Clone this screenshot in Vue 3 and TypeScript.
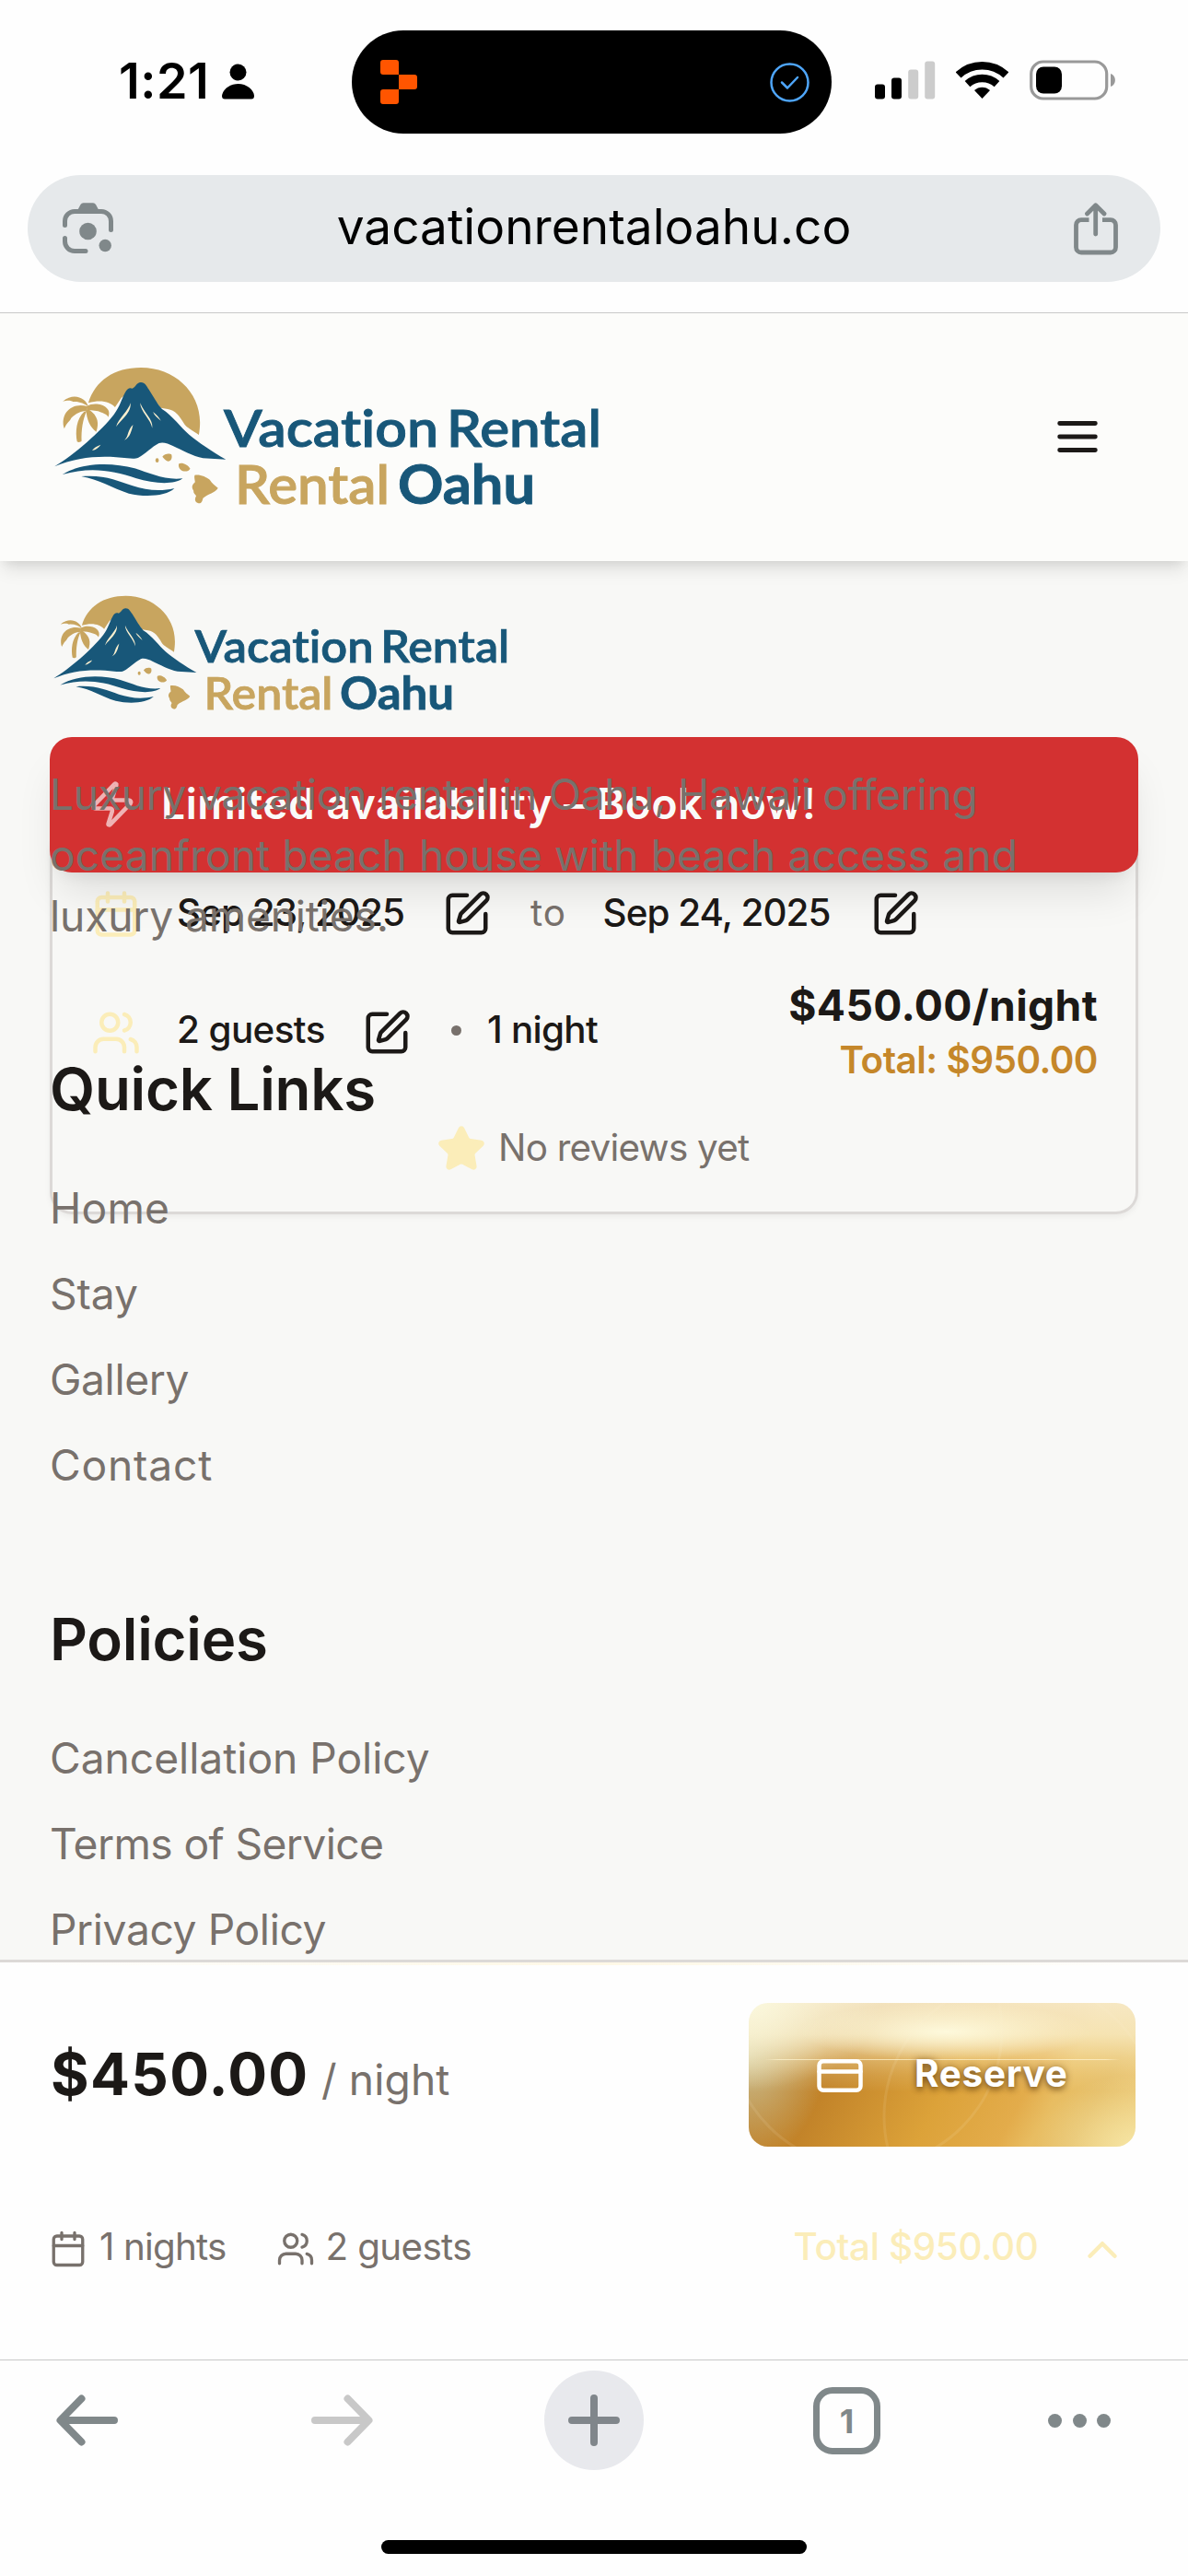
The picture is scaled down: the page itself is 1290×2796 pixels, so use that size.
<script setup lang="ts">
interface FooterLink { label: string; spacing: string }

const quickLinks: FooterLink[] = [
  { label: 'Home', spacing: '0.2px' },
  { label: 'Stay', spacing: '-0.1px' },
  { label: 'Gallery', spacing: '-0.4px' },
  { label: 'Contact', spacing: '0.8px' },
]
const policies: FooterLink[] = [
  { label: 'Cancellation Policy', spacing: '-0.05px' },
  { label: 'Terms of Service', spacing: '-0.6px' },
  { label: 'Privacy Policy', spacing: '-0.4px' },
]
</script>

<template>
  <div class="screen">
    <svg class="defs" width="0" height="0" aria-hidden="true">
      <symbol id="brand" viewBox="0 0 640 240">
        <g transform="scale(0.40816 0.33333)">
          <path fill="#c8a55f" d="M137 172C155 100 205 57 277 57C365 57 434 135 434 235C434 250 433 262 431 276C415 262 398 252 392 240C380 215 368 195 348 192L330 188L277 110L225 155L208 186C195 168 170 160 137 172Z" />
          <g fill="#c8a55f">
            <path d="M137 184C131 158 100 136 69 167C85 162 92 165 96 168C112 166 127 174 137 184Z" />
            <path d="M134 183C95 168 60 205 73 256C80 235 88 232 91 222C104 205 118 198 134 197Z" />
            <path d="M132 183C158 164 203 183 190 218C186 208 178 206 172 203C160 197 148 196 134 196Z" />
            <path d="M131 196C133 225 140 250 158 266C165 240 165 215 137 192Z" />
            <path d="M126 200C105 225 102 265 107 298C112 302 117 298 119 296C118 260 122 225 133 198Z" />
          </g>
          <path fill="#185779" d="M47 379C100 340 170 265 205 210C222 182 225 160 235 138C240 125 247 121 254 125C262 122 266 104 277 105C288 105 292 118 298 128C310 150 320 175 333 192C360 212 385 255 405 275C430 300 465 330 503 356L442 352C415 345 385 325 362 312C350 304 335 298 325 303C305 315 290 338 270 350C262 355 250 353 240 352C180 342 110 345 47 379Z" />
          <g fill="#fbf0cf">
            <path d="M249 172C246 195 215 225 211 250C225 225 252 205 249 172Z" />
            <path d="M275 172C275 200 303 225 307 254C310 225 285 205 275 172Z" />
            <path d="M309 201C312 212 322 222 330 230C325 218 318 210 309 201Z" />
            <path d="M256 243C240 262 245 280 233 293C248 285 252 262 256 243Z" />
            <path d="M170 308C160 312 152 318 147 327C158 324 164 318 170 308Z" />
          </g>
          <path fill="#185779" d="M68 405C120 365 200 365 260 385C300 400 340 425 388 418C365 440 310 435 265 418C200 390 140 380 68 405Z" />
          <path fill="#185779" d="M118 411C180 405 215 425 255 442C290 455 325 462 366 450C345 475 290 480 245 467C200 450 165 420 118 411Z" />
          <g fill="#c8a55f">
            <ellipse cx="320" cy="359" rx="4.5" ry="7" />
            <path d="M334 347C340 335 355 336 358 340C361 350 358 362 349 362C343 360 338 352 334 347Z" />
            <path d="M378 370C385 364 402 372 408 386C404 396 390 397 383 390C378 385 376 378 378 370Z" />
            <path d="M420 407C435 404 450 413 460 422C466 435 474 440 482 449C475 465 455 468 442 482C440 492 438 500 430 499C422 496 418 488 424 475C420 468 416 465 417 458C410 445 414 438 421 430C420 420 418 412 420 407Z" />
          </g>
        </g>
      </symbol>
      <symbol id="i-calendar" viewBox="0 0 24 24">
        <path d="M8 2v4M16 2v4M3 10h18" />
        <rect x="3" y="4" width="18" height="18" rx="2" />
      </symbol>
      <symbol id="i-users" viewBox="0 0 24 24">
        <path d="M16 21v-2a4 4 0 0 0-4-4H6a4 4 0 0 0-4 4v2M22 21v-2a4 4 0 0 0-3-3.87M16 3.13a4 4 0 0 1 0 7.75" />
        <circle cx="9" cy="7" r="4" />
      </symbol>
      <symbol id="i-edit" viewBox="0 0 24 24">
        <path d="M12 3H5a2 2 0 0 0-2 2v14a2 2 0 0 0 2 2h14a2 2 0 0 0 2-2v-7" />
        <path d="M18.375 2.625a1 1 0 0 1 3 3l-9.013 9.014a2 2 0 0 1-.853.505l-2.873.84a.5.5 0 0 1-.62-.62l.84-2.873a2 2 0 0 1 .506-.852z" />
      </symbol>
    </svg>

    <div class="status">
      <span class="clock">1:21</span>
      <svg class="person" width="36" height="39" viewBox="0 0 36 39">
        <circle cx="17.5" cy="9.5" r="9" />
        <path d="M17.5 22C27 22 34.5 28.5 35 35C35 37.5 34 38.5 32 38.5H3C1 38.5 0 37.5 0 35C.5 28.5 8 22 17.5 22Z" />
      </svg>
      <div class="island">
        <svg width="40" height="48" viewBox="0 0 40 48" fill="#ff5500">
          <path d="M3 0H17Q20 0 20 3V16H3Q0 16 0 13V3Q0 0 3 0ZM20 16H37Q40 16 40 19V29Q40 32 37 32H20ZM3 32H20V45Q20 48 17 48H3Q0 48 0 45V35Q0 32 3 32Z" />
        </svg>
        <svg width="43" height="43" viewBox="0 0 43 43" fill="none" stroke="#4ea5f9" stroke-width="2.5" stroke-linecap="round" stroke-linejoin="round">
          <circle cx="21.5" cy="21.5" r="20" />
          <path d="M13 21.5L19 27.5L30 16" />
        </svg>
      </div>
      <svg class="signal" width="66" height="42" viewBox="0 0 66 42">
        <rect x="0" y="25.5" width="11" height="16" rx="3" />
        <rect x="18" y="18.5" width="11" height="23" rx="3" />
        <rect x="36.2" y="9.5" width="11" height="32" rx="3" fill="#ccc" />
        <rect x="54.2" y="0.5" width="11" height="41" rx="3" fill="#ccc" />
      </svg>
      <svg class="wifi" width="57" height="42" viewBox="0 0 57 42">
        <g fill="none" stroke="#000" stroke-width="8.5">
          <path d="M2.6 16.5A38 38 0 0 1 54.4 16.5" />
          <path d="M12.5 26.2A24 24 0 0 1 44.5 26.2" />
        </g>
        <path d="M28.5 42L20 33A12.5 12.5 0 0 1 37 33Z" />
      </svg>
      <svg class="battery" width="94" height="44" viewBox="0 0 94 44">
        <rect x="1.7" y="2" width="82" height="40" rx="13" fill="none" stroke="#999" stroke-width="3.2" />
        <rect x="7" y="7.5" width="28" height="29" rx="8" />
        <path fill="#999" d="M88 15C94.5 17 94.5 27 88 29Z" />
      </svg>
    </div>

    <div class="urlbar">
      <svg width="56" height="56" viewBox="0 0 56 56" fill="#80888a">
        <path fill="none" stroke="#80888a" stroke-width="5" stroke-linecap="round" d="M2.5 24.5V20A10.5 10.5 0 0 1 13 9.5H42A10.5 10.5 0 0 1 52.5 20V29.5M2.5 38.5V42A10.5 10.5 0 0 0 13 52.5H25" />
        <path d="M16 8.5L19.5 2Q20.5 .3 22.5 .3H33Q35 .3 36 2L39.5 8.5Z" />
        <circle cx="27.5" cy="31" r="9.3" />
        <circle cx="46.2" cy="46.5" r="6.7" />
      </svg>
      <span class="url">vacationrentaloahu.co</span>
      <svg width="48" height="57" viewBox="0 0 48 57" fill="none" stroke="#80888a" stroke-width="4.8" stroke-linejoin="round">
        <path d="M16.5 18.7H8A5.5 5.5 0 0 0 2.5 24.2V48.5A5.5 5.5 0 0 0 8 54H40A5.5 5.5 0 0 0 45.5 48.5V24.2A5.5 5.5 0 0 0 40 18.7H31" />
        <path stroke-linecap="round" d="M23.7 34V3.5M14.5 12L23.7 2.8L33 12" />
      </svg>
    </div>

    <header class="site-header">
      <svg class="logo" width="640" height="240" viewBox="0 0 640 240">
        <use href="#brand" width="640" height="240" />
        <text x="203" y="105" textLength="233" lengthAdjust="spacingAndGlyphs">Vacation</text>
        <text x="445" y="105" textLength="168" lengthAdjust="spacingAndGlyphs">Rental</text>
        <text class="sand" x="215" y="166.5" textLength="168" lengthAdjust="spacingAndGlyphs">Rental</text>
        <text class="bold" x="392" y="166.5" textLength="149" lengthAdjust="spacingAndGlyphs">Oahu</text>
      </svg>
      <svg class="menu" width="58" height="58" viewBox="0 0 24 24"><path d="M4 6h16M4 12h16M4 18h16" /></svg>
    </header>

    <main class="stage">
      <section class="booking">
        <div class="banner">
          <svg class="icon zap" viewBox="0 0 24 24"><path d="M4 14a1 1 0 0 1-.78-1.63l9.9-10.2a.5.5 0 0 1 .86.46l-1.92 6.02A1 1 0 0 0 13 10h7a1 1 0 0 1 .78 1.63l-9.9 10.2a.5.5 0 0 1-.86-.46l1.92-6.02A1 1 0 0 0 11 14z" /></svg>
          <span>Limited availability – Book now!</span>
        </div>
        <div class="card">
          <div class="row dates">
            <svg class="icon gold"><use href="#i-calendar" /></svg>
            <span class="date from">Sep 23, 2025</span>
            <svg class="icon"><use href="#i-edit" /></svg>
            <span class="to">to</span>
            <span class="date until">Sep 24, 2025</span>
            <svg class="icon"><use href="#i-edit" /></svg>
          </div>
          <div class="row party">
            <svg class="icon gold"><use href="#i-users" /></svg>
            <span class="guests">2 guests</span>
            <svg class="icon"><use href="#i-edit" /></svg>
            <i class="dot"></i>
            <span class="nights">1 night</span>
            <div class="price">
              <strong>$450.00/night</strong>
              <span>Total: $950.00</span>
            </div>
          </div>
          <div class="row reviews">
            <svg class="icon star" viewBox="0 0 24 24"><path d="M11.525 2.295a.53.53 0 0 1 .95 0l2.31 4.679a2.123 2.123 0 0 0 1.595 1.16l5.166.756a.53.53 0 0 1 .294.904l-3.736 3.638a2.123 2.123 0 0 0-.611 1.878l.882 5.14a.53.53 0 0 1-.771.56l-4.618-2.428a2.122 2.122 0 0 0-1.973 0L6.396 21.01a.53.53 0 0 1-.77-.56l.881-5.139a2.122 2.122 0 0 0-.611-1.879L2.16 9.795a.53.53 0 0 1 .294-.906l5.165-.755a2.122 2.122 0 0 0 1.597-1.16z" /></svg>
            <span>No reviews yet</span>
          </div>
        </div>
      </section>

      <footer class="site-footer">
        <svg class="logo" width="534" height="200" viewBox="0 0 640 240">
          <use href="#brand" width="640" height="240" />
          <text x="203" y="105" textLength="233" lengthAdjust="spacingAndGlyphs">Vacation</text>
          <text x="445" y="105" textLength="168" lengthAdjust="spacingAndGlyphs">Rental</text>
          <text class="sand" x="215" y="166.5" textLength="168" lengthAdjust="spacingAndGlyphs">Rental</text>
          <text class="bold" x="392" y="166.5" textLength="149" lengthAdjust="spacingAndGlyphs">Oahu</text>
        </svg>
        <p class="about">
          <span class="l1">Luxury vacation rental in Oahu, Hawaii offering</span><br />
          <span class="l2">oceanfront beach house with beach access and</span><br />
          <span class="l3">luxury amenities.</span>
        </p>
        <h3>Quick Links</h3>
        <a v-for="link in quickLinks" :key="link.label" :style="{ letterSpacing: link.spacing }">{{ link.label }}</a>
        <h3 class="second">Policies</h3>
        <a v-for="link in policies" :key="link.label" :style="{ letterSpacing: link.spacing }">{{ link.label }}</a>
      </footer>
    </main>

    <section class="reserve-bar">
      <div class="top-row">
        <div class="rate"><strong>$450.00</strong><span>/ night</span></div>
        <button class="reserve">
          <svg class="rings" width="420" height="156" viewBox="0 0 420 156">
            <circle cx="127" cy="30" r="148" />
            <circle cx="295" cy="123" r="148" />
          </svg>
          <span class="shine"></span>
          <svg class="icon cc" viewBox="0 0 24 24"><rect x="2" y="5" width="20" height="14" rx="2" /><path d="M2 10h20" /></svg>
          <span class="label">Reserve</span>
        </button>
      </div>
      <div class="summary">
        <svg class="small-icon"><use href="#i-calendar" /></svg>
        <span class="n">1 nights</span>
        <svg class="small-icon"><use href="#i-users" /></svg>
        <span class="g">2 guests</span>
        <span class="total">Total $950.00</span>
        <svg class="icon gold chevron" viewBox="0 0 24 24"><path d="m18 15-6-6-6 6" /></svg>
      </div>
    </section>

    <nav class="toolbar">
      <div class="buttons">
        <svg width="68" height="56" viewBox="0 0 68 56" fill="none" stroke="#80888a" stroke-width="8" stroke-linecap="round" stroke-linejoin="round"><path d="M63 28H5M27.5 4.5L4.5 28L27.5 51.5" /></svg>
        <svg class="fwd" width="68" height="56" viewBox="0 0 68 56" fill="none" stroke="#c8c8c8" stroke-width="8" stroke-linecap="round" stroke-linejoin="round"><path d="M5 28H63M40.5 4.5L63.5 28L40.5 51.5" /></svg>
        <span class="plus"><svg width="56" height="56" viewBox="0 0 56 56" fill="none" stroke="#80868b" stroke-width="8" stroke-linecap="round"><path d="M28 4V52M4 28H52" /></svg></span>
        <span class="tabs">1</span>
        <span class="more"><i></i><i></i><i></i></span>
      </div>
      <div class="home"></div>
    </nav>
  </div>
</template>

<style>
body { margin: 0; background: #fff; }
</style>

<style scoped>
.screen {
  width: 1290px;
  height: 2796px;
  display: flex;
  flex-direction: column;
  overflow: hidden;
  background: #fefefe;
  color: #1c1917;
  font-family: Inter, sans-serif;
  font-size: 46.2px;
}
.screen * { box-sizing: border-box; }
svg { display: block; flex: none; }
.defs { position: absolute; }
span, strong { white-space: nowrap; }

.status { height: 190px; flex: none; display: flex; align-items: flex-start; color: #000; }
.clock { width: 112px; margin: 55px 0 0 129px; font-size: 53.9px; font-weight: 600; line-height: 66px; letter-spacing: 0.5px; }
.person { margin-top: 69px; }
.island { width: 521px; height: 112px; margin: 33px 0 0 105px; padding: 0 24px 0 31px; border-radius: 56px; background: #000; display: flex; align-items: center; justify-content: space-between; }
.signal { margin: 65.5px 0 0 47px; }
.wifi { margin: 65px 0 0 22px; }
.battery { margin: 64.5px 0 0 23px; }

.urlbar { height: 116px; flex: none; margin: 0 30px 33px; padding: 0 46px 0 38px; border-radius: 58px; background: #e6e9eb; color: #000; display: flex; align-items: center; justify-content: space-between; }
.url { font-size: 53.2px; line-height: 60px; margin: -4px 0 0 0; }

.site-header { height: 270px; flex: none; position: relative; z-index: 3; border-top: 1px solid #c8c8c8; background: #fcfcfa; display: flex; justify-content: space-between; align-items: center; padding: 0 91px 0 40px; box-shadow: 0 12px 18px -3px rgba(0, 0, 0, 0.1), 0 6px 12px -6px rgba(0, 0, 0, 0.1); }
.site-header .logo { margin-top: 50px; }
.logo text { font-family: Lato, sans-serif; font-size: 56.5px; font-weight: 600; font-variant-ligatures: none; fill: #185779; stroke: #185779; stroke-width: 0.9; }
.logo .sand { font-size: 58.5px; fill: #c8a55f; stroke: #c8a55f; }
.logo .bold { font-size: 58.5px; font-weight: 700; }
.menu { margin-top: -2px; stroke: #1c1917; stroke-width: 2; stroke-linecap: round; fill: none; }

.icon { width: 54px; height: 54px; fill: none; stroke: currentColor; stroke-width: 2; stroke-linecap: round; stroke-linejoin: round; }
.gold { color: #fbedb9; }

.stage { height: 1518px; flex: none; display: grid; overflow: hidden; background: #f8f8f6; }
.booking, .site-footer { grid-area: 1 / 1; min-width: 0; }
.booking { padding: 191px 54px 0; }
.banner { position: relative; z-index: 1; height: 147px; padding-left: 41px; display: flex; align-items: center; gap: 26px; border-radius: 24px; background: #d33131; color: #fafaf9; font-weight: 600; letter-spacing: 0.51px; box-shadow: 0 30px 45px -9px rgba(0, 0, 0, 0.1), 0 12px 18px -12px rgba(0, 0, 0, 0.1); }
.banner span { margin-top: -4px; }
.zap { color: #efb3b4; margin-top: -2px; }
.card { height: 418px; margin-top: -47px; padding: 62px 41px 0 42px; border: 3px solid #dcd9d7; border-radius: 24px; box-shadow: 0 3px 6px rgba(0, 0, 0, 0.05); font-size: 40.4px; }
.row { display: flex; align-items: center; }
.row span { line-height: 52px; }
.dates { height: 54px; }
.date, .guests, .nights { font-weight: 500; margin-top: -2px; }
.date { letter-spacing: -0.95px; }
.from { margin-left: 39px; width: 288px; }
.to { margin: -2px 0 0 42px; width: 78.5px; letter-spacing: 1px; color: #78716c; }
.until { width: 290.5px; }
.party { height: 126px; margin-top: 39px; }
.guests { margin-left: 39px; width: 200.5px; letter-spacing: -0.6px; margin-top: -6px; }
.dot { width: 11px; height: 11px; margin: -5px 28px 0 43.5px; border-radius: 50%; background: #78716c; }
.nights { letter-spacing: -0.74px; margin-top: -6px; }
.price { margin-left: auto; height: 126px; text-align: right; display: flex; flex-direction: column; }
.price strong { font-size: 46.2px; font-weight: 700; line-height: 66px; letter-spacing: 0.35px; }
.price span { font-weight: 600; letter-spacing: -0.5px; color: #c5872a; line-height: 54px; }
.reviews { height: 54px; margin: 36px 0 0 375px; color: #78716c; letter-spacing: -0.75px; }
.reviews span { margin: -2px 0 0 13px; }
.star { fill: #fbedb9; stroke: #fbedb9; }

.site-footer { position: relative; z-index: 2; padding: 22px 54px 0; color: #78716c; display: flex; flex-direction: column; align-items: flex-start; }
.site-footer .logo { margin-left: -12px; }
.about { margin: -2px 0 0; line-height: 66px; }
.l1 { letter-spacing: -0.3px; }
.l2 { letter-spacing: 0.07px; }
.l3 { letter-spacing: -0.17px; }
.site-footer h3 { margin: 115px 0 43px; height: 80px; font-size: 63.6px; font-weight: 600; line-height: 80px; letter-spacing: -0.25px; color: #1c1917; }
.site-footer h3.second { margin-top: 102px; }
.site-footer a { display: block; height: 93px; line-height: 93px; flex: none; }

.reserve-bar { height: 434px; flex: none; border-top: 3px solid #dcd9d7; padding: 0 57px 0 55px; background: linear-gradient(90deg, #fefefe, #fff8e6 50%, #fefefe) top / 100% 3px no-repeat #fefefe; }
.top-row { display: flex; justify-content: space-between; align-items: center; padding-top: 44px; }
.rate { display: flex; align-items: baseline; margin-top: -3px; }
.rate strong { width: 294px; font-size: 63.6px; font-weight: 700; letter-spacing: 1.3px; }
.rate span { letter-spacing: 0.1px; color: #78716c; }
.reserve {
  position: relative; overflow: hidden; width: 420px; height: 156px; padding: 0 0 0 72px; border: 0; border-radius: 21px;
  display: flex; align-items: center; color: #fff; font-family: Inter, sans-serif;
  background:
    radial-gradient(ellipse 38% 20% at 51% 20%, rgba(255, 252, 225, 0.9), rgba(255, 252, 225, 0)),
    radial-gradient(ellipse 34% 60% at 0% 0%, rgba(253, 253, 228, 0.8), rgba(253, 253, 228, 0)),
    linear-gradient(180deg, rgba(248, 236, 205, 0.9) 0%, rgba(250, 238, 200, 0.78) 22%, rgba(250, 236, 190, 0.4) 38%, rgba(250, 236, 190, 0.16) 50%, rgba(250, 236, 190, 0) 62%),
    radial-gradient(ellipse 20% 75% at 0% 35%, rgba(205, 200, 160, 0.9), rgba(205, 200, 160, 0)),
    radial-gradient(ellipse 26% 50% at 100% 100%, rgba(248, 236, 175, 0.8), rgba(240, 215, 140, 0)),
    linear-gradient(118deg, #b87a25 0%, #c28329 26%, #dca239 52%, #e3ac4b 70%, #e8bd62 77%, #e5bd66 86%, #edca78 100%);
}
.rings { position: absolute; left: 0; top: 0; fill: none; stroke: rgba(255, 245, 215, 0.1); stroke-width: 3; }
.shine { position: absolute; left: 17px; right: 17px; top: 60.5px; height: 1.5px; background: linear-gradient(90deg, rgba(255, 246, 210, 0), rgba(255, 246, 210, 0.7) 4%, rgba(255, 246, 210, 0.7) 96%, rgba(255, 246, 210, 0)); }
.cc { position: relative; margin-top: 2px; }
.label { position: relative; margin: -4px 0 0 54px; font-size: 40.4px; font-weight: 700; letter-spacing: 0.75px; text-shadow: 0 3px 6px rgba(80, 45, 5, 0.6), 0 0 9px rgba(80, 45, 5, 0.35); }
.summary { height: 54px; margin: 84px 0 0 -2px; display: flex; align-items: center; color: #78716c; font-size: 40.4px; }
.summary span { margin-top: -5px; }
.small-icon { width: 42px; height: 42px; fill: none; stroke: currentColor; stroke-width: 1.9; stroke-linecap: round; stroke-linejoin: round; }
.summary .n { margin-left: 13px; width: 191.5px; letter-spacing: -0.86px; }
.summary .g { margin-left: 12px; letter-spacing: -0.65px; }
.summary .total { margin-left: auto; font-weight: 500; letter-spacing: -0.33px; color: #fbedb9; }
.chevron { margin: 2px 9px 0 42.5px; }

.toolbar { height: 235px; flex: none; border-top: 1px solid #c8c8c8; display: flex; flex-direction: column; align-items: center; justify-content: space-between; padding: 11px 0 24px; }
.buttons { width: 1290px; height: 108px; padding: 0 84px 0 61px; display: flex; align-items: center; }
.fwd { margin-left: 208px; }
.plus { width: 108px; height: 108px; margin-left: 186px; border-radius: 50%; background: #e8e9ed; display: flex; align-items: center; justify-content: center; }
.tabs { width: 73px; height: 73px; margin-left: 184px; border: 7px solid #80888a; border-radius: 21px; color: #80888a; font-size: 36px; font-weight: 700; line-height: 61px; text-align: center; }
.more { margin-left: auto; display: flex; gap: 11.5px; }
.more i { width: 15px; height: 15px; border-radius: 50%; background: #80888a; }
.home { width: 462px; height: 15px; border-radius: 8px; background: #000; }
</style>
